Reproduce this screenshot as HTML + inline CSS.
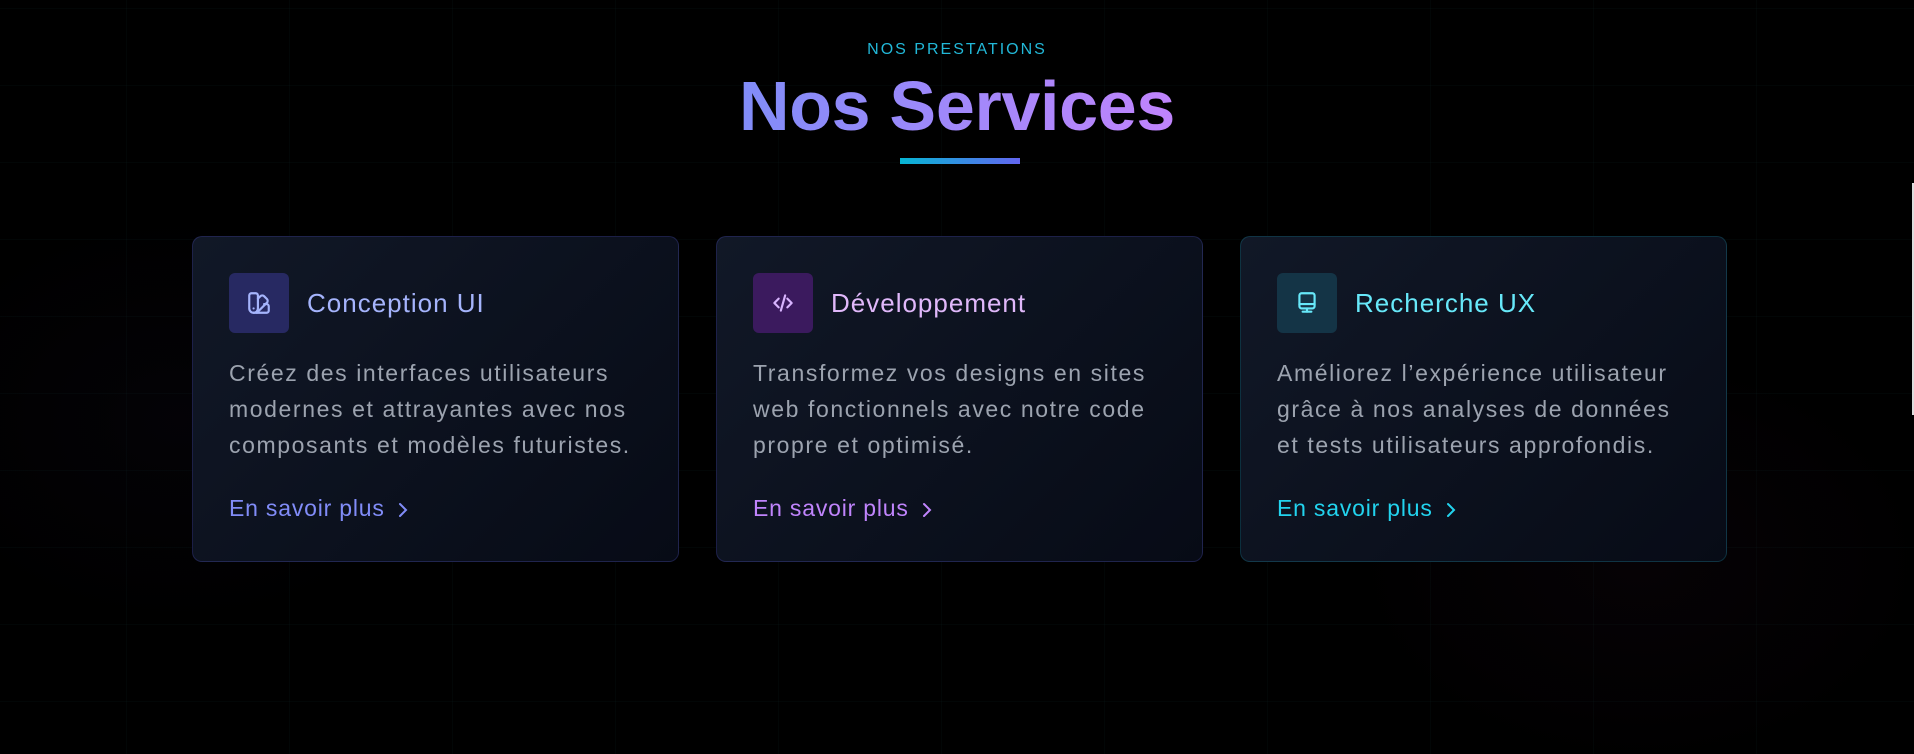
<!DOCTYPE html>
<html><head><meta charset="utf-8"><style>
html,body{margin:0;padding:0;width:1914px;height:754px;overflow:hidden;background:#000;}
body{font-family:"Liberation Sans",sans-serif;position:relative;
background-image:
radial-gradient(ellipse 420px 300px at 1640px 560px, rgba(50,15,45,0.12), transparent 70%),
radial-gradient(ellipse 400px 300px at 180px 420px, rgba(35,20,60,0.10), transparent 70%),
linear-gradient(rgba(20,60,60,0.10) 1px, transparent 1px),
linear-gradient(90deg, rgba(20,60,60,0.10) 1px, transparent 1px);
background-size:auto,auto,163px 77px,163px 77px;
background-position:0 0,0 0,0 8px,126px 0;}
.sub{position:absolute;top:41px;left:0;width:1914px;text-align:center;color:#22b8d8;font-size:16px;letter-spacing:2px;}
.h{position:absolute;top:64px;left:0;width:1914px;text-align:center;font-size:70px;font-weight:bold;line-height:84px;letter-spacing:-0.3px;}
.h span{background:linear-gradient(90deg,#818cf8,#c084fc);-webkit-background-clip:text;background-clip:text;color:transparent;}
.bar{position:absolute;left:900px;top:158px;width:120px;height:6px;background:linear-gradient(90deg,#06b6d4,#6366f1);}
.card{position:absolute;top:236px;width:487px;height:326px;border-radius:10px;border:1px solid rgba(99,102,241,0.22);
background:linear-gradient(135deg,#111827,#070b16);box-sizing:border-box;}
.ib{position:absolute;left:36px;top:36px;width:60px;height:60px;border-radius:6px;display:flex;align-items:center;justify-content:center;}
.t{position:absolute;left:114px;top:50px;font-size:26px;font-weight:500;line-height:32px;letter-spacing:1px;}
.p{position:absolute;left:36px;top:118px;width:450px;color:#9ca3af;font-size:23px;line-height:36px;white-space:nowrap;letter-spacing:1.6px;}
.l{position:absolute;left:36px;top:256px;font-size:23px;line-height:30px;letter-spacing:0.8px;}
.l svg{vertical-align:-3px;margin-left:10px;}
.sb{position:absolute;right:0;top:183px;width:2px;height:232px;background:#ddd;}
</style></head><body>
<div class="sub">NOS PRESTATIONS</div>
<div class="h"><span>Nos Services</span></div>
<div class="bar"></div>

<div class="card" style="left:192px">
 <div class="ib" style="background:#272962"><svg width="26" height="26" viewBox="0 0 24 24" fill="none" stroke="#a5b4fc" stroke-width="2" stroke-linecap="round" stroke-linejoin="round"><path d="M11 17a4 4 0 0 1-8 0V5a2 2 0 0 1 2-2h4a2 2 0 0 1 2 2Z"/><path d="M16.7 13H19a2 2 0 0 1 2 2v4a2 2 0 0 1-2 2H7"/><path d="M7 17h.01"/><path d="m11 8 2.3-2.3a2.4 2.4 0 0 1 3.4 0l2.6 2.6a2.4 2.4 0 0 1 0 3.4L10 21"/></svg></div>
 <div class="t" style="color:#a5b4fc">Conception UI</div>
 <div class="p">Créez des interfaces utilisateurs<br>modernes et attrayantes avec nos<br>composants et modèles futuristes.</div>
 <div class="l" style="color:#818cf8">En savoir plus<svg width="16" height="18" viewBox="0 0 16 18" fill="none" stroke="#818cf8" stroke-width="2" stroke-linecap="round"><path d="M5 3l6 6-6 6"/></svg></div>
</div>

<div class="card" style="left:716px">
 <div class="ib" style="background:#3b1a5e"><svg width="26" height="26" viewBox="0 0 24 24" fill="none" stroke="#d8b4fe" stroke-width="2" stroke-linecap="round" stroke-linejoin="round"><path d="M8 8l-4 4 4 4"/><path d="M16 8l4 4-4 4"/><path d="M14 5l-4 14"/></svg></div>
 <div class="t" style="color:#e0b8fa">Développement</div>
 <div class="p">Transformez vos designs en sites<br>web fonctionnels avec notre code<br>propre et optimisé.</div>
 <div class="l" style="color:#c084fc">En savoir plus<svg width="16" height="18" viewBox="0 0 16 18" fill="none" stroke="#c084fc" stroke-width="2" stroke-linecap="round"><path d="M5 3l6 6-6 6"/></svg></div>
</div>

<div class="card" style="left:1240px;border-color:rgba(34,211,238,0.18)">
 <div class="ib" style="background:#143446"><svg width="26" height="26" viewBox="0 0 24 24" fill="none" stroke="#67e8f9" stroke-width="2" stroke-linecap="round" stroke-linejoin="round"><rect x="5" y="3" width="14" height="14" rx="2"/><path d="M5 13h14"/><path d="M12 17v3"/><path d="M8 20h8"/></svg></div>
 <div class="t" style="color:#67e8f9">Recherche UX</div>
 <div class="p">Améliorez l’expérience utilisateur<br>grâce à nos analyses de données<br>et tests utilisateurs approfondis.</div>
 <div class="l" style="color:#22d3ee">En savoir plus<svg width="16" height="18" viewBox="0 0 16 18" fill="none" stroke="#22d3ee" stroke-width="2" stroke-linecap="round"><path d="M5 3l6 6-6 6"/></svg></div>
</div>
<div class="sb"></div>
</body></html>
